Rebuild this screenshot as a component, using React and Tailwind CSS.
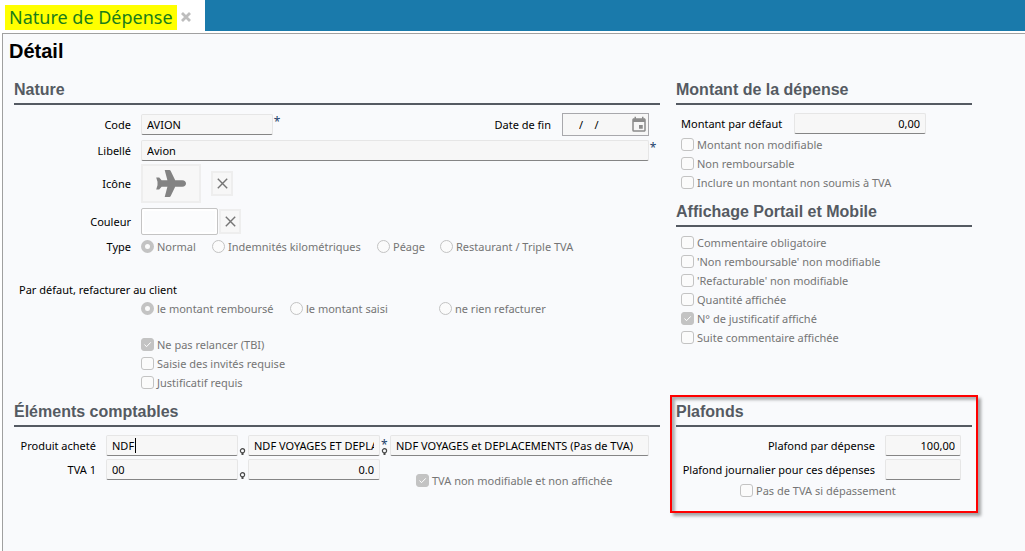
import {MdEvent} from 'react-icons/md';

const inputClass = 'h-[21px] min-w-0 rounded-[2px] border border-[#e6e6e6] border-b-[#858585] bg-[#f7f7f7] px-[5px] text-black outline-none';

const Section = ({ title, className = '', children }) => (
    <section className={className}>
        <h2 className="mb-[6px] border-b-2 border-[#555a62] pb-[3px] text-[16px] leading-5 font-bold text-[#555a62]"
            style={{fontFamily: '"Liberation Sans", Arial, sans-serif'}}>{title}</h2>
        {children}
    </section>
);

const Check = ({ label, checked = false, className = '' }) => (
    <label className={'flex h-[19px] items-center gap-[3px] whitespace-nowrap text-[#757575] ' + className}>
        <span className="grid">
            <input
                type="checkbox"
                disabled
                defaultChecked={checked}
                className="col-start-1 row-start-1 h-[13px] w-[13px] appearance-none rounded-[3px] border border-[#c3c3c3] bg-[#fbfbfb] checked:bg-[#c3c3c3]"
            />
            {checked ? (
                <svg className="col-start-1 row-start-1 h-[13px] w-[13px]" viewBox="0 0 13 13" fill="none" stroke="white">
                    <path d="M3.5 6.5 5.5 8.7 9.8 4.3"/>
                </svg>
            ) : null}
        </span>
        {label}
    </label>
);

const Radio = ({ label, name, checked = false, className = '' }) => (
    <label className={'flex h-[19px] items-center gap-[3px] whitespace-nowrap text-[#757575] ' + className}>
        <input
            type="radio"
            name={name}
            disabled
            defaultChecked={checked}
            className="h-[13px] w-[13px] appearance-none rounded-full border border-[#c3c3c3] bg-[#fbfbfb] checked:border-4"
        />
        {label}
    </label>
);

const Label = ({ id, children, className = 'w-[117px]' }) => (
    <label htmlFor={id} className={'shrink-0 text-right whitespace-nowrap ' + className}>{children}</label>
);

const Star = () => <span className="w-2 self-start text-center text-[12px] leading-[18px] text-[#24426b]">*</span>;

const Plane = () => (
    <svg className="h-[27px] w-[30px]" viewBox="0 0 30 27" fill="#838383">
        <path d="M8.7 0H13.4Q14.2 0 14.6 .8L19.2 10.3H26.3C28.6 10.3 30 12 30 13.5S28.6 16.7 26.3 16.7H19.2L14.6 26.2Q14.2 27 13.4 27H8.7L11.4 16.7H5.6L3.2 19.6H.2L1.5 15.2V11.8L.2 7.4H3.2L5.6 10.3H11.4Z"/>
    </svg>
);

const Cross = () => (
    <svg className="h-[11px] w-[11px]" viewBox="0 0 11 11" fill="none" stroke="#757575" strokeWidth="1.4">
        <path d="M.8.8 10.2 10.2M10.2.8.8 10.2"/>
    </svg>
);

const Lookup = () => (
    <svg className="h-2 w-[7px] shrink-0" viewBox="0 0 7 8" fill="none" stroke="#4a4a4a">
        <circle cx="3.5" cy="2.8" r="2.1" strokeWidth="1.2"/>
        <path d="M3.5 4.8V7" strokeWidth="2"/>
    </svg>
);

const displayOptions = [
    {label: 'Commentaire obligatoire'},
    {label: "'Non remboursable' non modifiable"},
    {label: "'Refacturable' non modifiable"},
    {label: 'Quantité affichée'},
    {label: 'N° de justificatif affiché', checked: true},
    {label: 'Suite commentaire affichée'},
];

export default function App() {
    return (
        <div className="flex min-h-screen flex-col bg-white text-[11px] leading-[19px] text-black"
             style={{fontFamily: '"Noto Sans", "Open Sans", sans-serif'}}>
            <header className="mb-[2px] flex h-[31px] bg-[#1a7aab]">
                <div className="flex items-center gap-1 bg-white pt-[3px] pr-[14px] pl-[5px]">
                    <span className="bg-[#ffff00] px-1 text-[18px] leading-[25px] whitespace-nowrap text-[#1a7d1a]">
                        Nature de Dépense
                    </span>
                    <button type="button" aria-label="Fermer" className="w-[10px]">
                        <svg className="h-[10px] w-[10px]" viewBox="0 0 10 10" stroke="#bdbdbd" strokeWidth="2.8">
                            <path d="M1 1 9 9M9 1 1 9"/>
                        </svg>
                    </button>
                </div>
            </header>

            <main className="ml-[2px] flex-1 border-t border-l border-[#a0a0a0] bg-[#f9fafc]">
                <h1 className="mb-3 pt-px pl-[6px] text-[20px] leading-[33px] font-bold"
                    style={{fontFamily: '"Liberation Sans", Arial, sans-serif'}}>Détail</h1>
                <div className="flex items-start gap-4 pr-[53px] pb-4 pl-[11px]">
                    <div className="min-w-0 flex-1">
                        <Section title="Nature">
                            <div className="flex flex-col gap-[3px] pt-[2px]">
                                <div className="flex h-[23px] items-center">
                                    <Label id="code">Code</Label>
                                    <input id="code" className={inputClass + ' ml-[10px] w-[132px]'} defaultValue="AVION"/>
                                    <Star/>
                                    <Label id="endDate" className="ml-auto">Date de fin</Label>
                                    <div className="mr-[11px] ml-[11px] flex h-[23px] w-[87px] items-center border border-[#a8a8ac] bg-[#f7f7f7]">
                                        <input id="endDate" className="w-0 flex-1 pl-4 whitespace-pre outline-none" defaultValue="/    /"/>
                                        <MdEvent className="h-[18px] w-[18px] text-[#8c8c8c]"/>
                                    </div>
                                </div>
                                <div className="flex h-[23px] items-center pr-[3px]">
                                    <Label id="title">Libellé</Label>
                                    <input id="title" className={inputClass + ' ml-[10px] flex-1'} defaultValue="Avion"/>
                                    <Star/>
                                </div>
                            </div>
                            <div className="mt-[2px] flex h-[39px] items-center">
                                <span className="w-[117px] text-right">Icône</span>
                                <button type="button" aria-label="Avion" className="ml-[10px] flex h-[39px] w-[60px] items-center justify-center border-2 border-[#eeeeee] bg-[#f7f7f7]">
                                    <Plane/>
                                </button>
                                <button type="button" aria-label="Effacer l'icône" className="ml-[10px] flex h-[25px] w-[22px] items-center justify-center border-2 border-[#eeeeee] bg-[#f7f7f7]">
                                    <Cross/>
                                </button>
                            </div>
                            <div className="mt-[5px] flex h-[27px] items-center">
                                <span className="w-[117px] text-right">Couleur</span>
                                <button type="button" aria-label="Couleur" className="ml-[10px] h-[27px] w-[77px] rounded-[2px] border border-[#c4c4c4] bg-[#fbfcfd] shadow-[inset_0_0_0_2px_white]"/>
                                <button type="button" aria-label="Effacer la couleur" className="ml-px flex h-[25px] w-[22px] items-center justify-center border-2 border-[#eeeeee] bg-[#f7f7f7]">
                                    <Cross/>
                                </button>
                            </div>
                            <div className="mt-[2px] flex items-center">
                                <span className="mr-[10px] w-[117px] text-right">Type</span>
                                <Radio name="type" label="Normal" checked className="w-[71px]"/>
                                <Radio name="type" label="Indemnités kilométriques" className="w-[165px]"/>
                                <Radio name="type" label="Péage" className="w-[63px]"/>
                                <Radio name="type" label="Restaurant / Triple TVA"/>
                            </div>
                            <p className="mt-6 pl-[5px]">Par défaut, refacturer au client</p>
                            <div className="flex items-center pl-[127px]">
                                <Radio name="rebill" label="le montant remboursé" checked className="w-[149px]"/>
                                <Radio name="rebill" label="le montant saisi" className="w-[149px]"/>
                                <Radio name="rebill" label="ne rien refacturer"/>
                            </div>
                            <div className="mt-[17px] pl-[127px]">
                                <Check label="Ne pas relancer (TBI)" checked/>
                                <Check label="Saisie des invités requise"/>
                                <Check label="Justificatif requis"/>
                            </div>
                        </Section>

                        <Section title="Éléments comptables" className="mt-[10px]">
                            <div className="flex flex-col gap-px pt-px pr-[11px]">
                                <div className="flex h-[23px] items-center">
                                    <Label id="product" className="w-[82px]">Produit acheté</Label>
                                    <div className="relative ml-[10px] flex w-[132px] items-center">
                                        <input id="product" className={inputClass + ' w-full'} defaultValue="NDF"/>
                                        <span className="absolute left-[29px] h-[15px] w-px bg-black"/>
                                    </div>
                                    <div className="flex w-[10px] self-end pb-px pl-px"><Lookup/></div>
                                    <input aria-label="Libellé du produit" className={inputClass + ' w-[132px]'} defaultValue="NDF VOYAGES ET DEPLACEMENTS"/>
                                    <div className="flex w-[10px] flex-col self-end pb-px pl-px">
                                        <span className="h-3 text-[12px] leading-[18px] text-[#24426b]">*</span>
                                        <Lookup/>
                                    </div>
                                    <input aria-label="Nature du produit" className={inputClass + ' flex-1'} defaultValue="NDF VOYAGES et DEPLACEMENTS (Pas de TVA)"/>
                                </div>
                                <div className="flex h-[23px] items-start">
                                    <Label id="vat" className="w-[82px] pt-[2px]">TVA 1</Label>
                                    <input id="vat" className={inputClass + ' mt-px ml-[10px] w-[132px]'} defaultValue="00"/>
                                    <div className="flex w-[10px] self-end pb-px pl-px"><Lookup/></div>
                                    <input aria-label="Taux de TVA" className={inputClass + ' mt-px w-[132px] text-right'} defaultValue="0.0"/>
                                    <Check label="TVA non modifiable et non affichée" checked className="mt-[13px] ml-9"/>
                                </div>
                            </div>
                        </Section>
                    </div>

                    <div className="w-[296px] shrink-0">
                        <Section title="Montant de la dépense">
                            <div className="flex h-6 items-center pt-px pl-[5px]">
                                <Label id="amount" className="">Montant par défaut</Label>
                                <input id="amount" className={inputClass + ' mr-[46px] ml-auto w-[132px] text-right'} defaultValue="0,00"/>
                            </div>
                            <div className="pl-[5px]">
                                <Check label="Montant non modifiable"/>
                                <Check label="Non remboursable"/>
                                <Check label="Inclure un montant non soumis à TVA"/>
                            </div>
                        </Section>

                        <Section title="Affichage Portail et Mobile" className="mt-[10px]">
                            <div className="pl-[5px]">
                                {displayOptions.map((option) => (
                                    <Check key={option.label} label={option.label} checked={option.checked}/>
                                ))}
                            </div>
                        </Section>

                        <div className="-mx-[6px] mt-12 border-2 border-[#ff0000] px-1 pt-[5px] pb-[11px] shadow-[3px_3px_3px_rgba(0,0,0,0.35),inset_3px_3px_3px_rgba(0,0,0,0.3)]">
                            <Section title="Plafonds">
                                <div className="flex flex-col gap-px pt-px pr-[11px]">
                                    <div className="flex h-[23px] items-center justify-end gap-[10px]">
                                        <Label id="cap" className="">Plafond par dépense</Label>
                                        <input id="cap" className={inputClass + ' w-[76px] text-right'} defaultValue="100,00"/>
                                    </div>
                                    <div className="flex h-[23px] items-center justify-end gap-[10px]">
                                        <Label id="dayCap" className="">Plafond journalier pour ces dépenses</Label>
                                        <input id="dayCap" className={inputClass + ' w-[76px] text-right'}/>
                                    </div>
                                </div>
                                <Check label="Pas de TVA si dépassement" className="pl-16"/>
                            </Section>
                        </div>
                    </div>
                </div>
            </main>
        </div>
    );
}
